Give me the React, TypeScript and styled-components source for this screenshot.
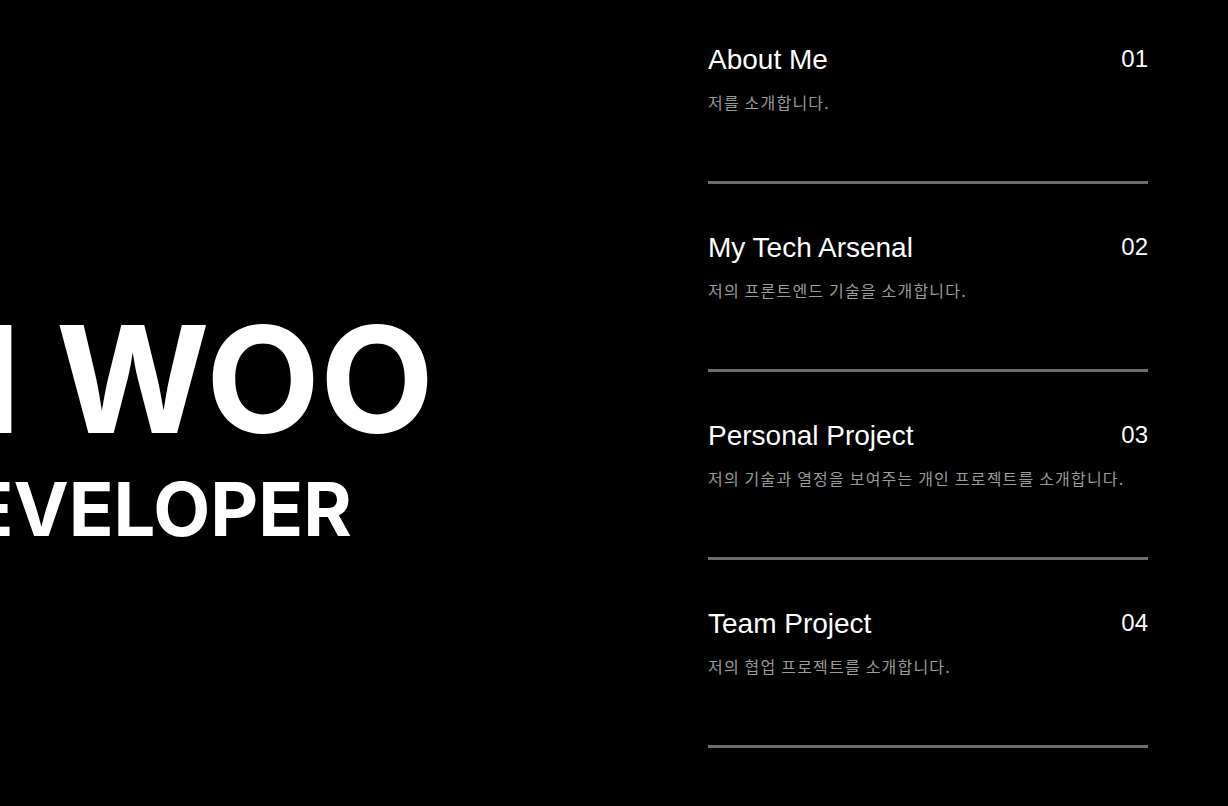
import React from 'react';
import styled, { createGlobalStyle } from 'styled-components';

const GlobalStyle = createGlobalStyle`
	* {
		box-sizing: border-box;
	}
	html,
	body {
		margin: 0;
		padding: 0;
		background: #000;
	}
	body {
		font-family: 'Liberation Sans', Arial, sans-serif;
		color: #fff;
	}
`;

const Page = styled.main`
	display: flex;
	width: 100%;
	height: 806px;
	overflow: hidden;
	background: #000;
`;

const Hero = styled.section`
	flex: 1;
	min-width: 0;
	overflow: hidden;
	display: flex;
	flex-direction: column;
	padding-top: 306px;
`;

const HeroInner = styled.div`
	margin-left: -107px;
	white-space: nowrap;
	font-family: Inter, 'Noto Sans', sans-serif;
	font-weight: 700;
	color: #fff;
`;

const Name = styled.h1`
	margin: 0;
	font-size: 148px;
	line-height: 1;
`;

const Role = styled.h2`
	margin: 11px 0 0 22px;
	font-size: 74px;
	line-height: 1.2;
`;

const MenuList = styled.ul`
	list-style: none;
	margin: 0 80px 0 0;
	padding: 0;
	width: 440px;
	display: flex;
	flex-direction: column;
	gap: 4px;
`;

const MenuItem = styled.li`
	height: 184px;
	padding-top: 44px;
	border-bottom: 3px solid #6b6b6b;
`;

const ItemHead = styled.div`
	display: flex;
	justify-content: space-between;
	align-items: flex-start;
`;

const ItemTitle = styled.h3`
	margin: 0;
	font-size: 28px;
	font-weight: 400;
	line-height: 32px;
	color: #fff;
`;

const ItemNumber = styled.span`
	font-size: 24px;
	line-height: 30px;
	color: #fff;
`;

const ItemDesc = styled.p`
	margin: 15px 0 0;
	font-family: 'Noto Sans CJK KR', 'Liberation Sans', sans-serif;
	font-size: 16px;
	line-height: 22px;
	letter-spacing: 1.2px;
	color: #9a9a9a;
`;

const menu = [
	{ no: '01', title: 'About Me', desc: '저를 소개합니다.' },
	{ no: '02', title: 'My Tech Arsenal', desc: '저의 프론트엔드 기술을 소개합니다.' },
	{ no: '03', title: 'Personal Project', desc: '저의 기술과 열정을 보여주는 개인 프로젝트를 소개합니다.' },
	{ no: '04', title: 'Team Project', desc: '저의 협업 프로젝트를 소개합니다.' },
];

const App = () => (
	<>
		<GlobalStyle />
		<Page>
			<Hero>
				<HeroInner>
					<Name>JI WOO</Name>
					<Role>DEVELOPER</Role>
				</HeroInner>
			</Hero>
			<MenuList>
				{menu.map((item) => (
					<MenuItem key={item.no}>
						<ItemHead>
							<ItemTitle>{item.title}</ItemTitle>
							<ItemNumber>{item.no}</ItemNumber>
						</ItemHead>
						<ItemDesc>{item.desc}</ItemDesc>
					</MenuItem>
				))}
			</MenuList>
		</Page>
	</>
);

export default App;
